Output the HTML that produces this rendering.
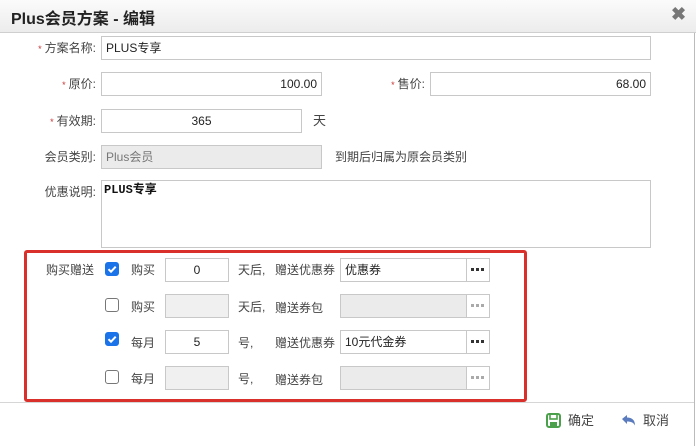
<!DOCTYPE html>
<html><head><meta charset="utf-8"><style>
*{margin:0;padding:0;box-sizing:border-box}
body{width:696px;height:446px;background:#fff;position:relative;overflow:hidden;font-family:"Liberation Sans","Noto Sans CJK SC",sans-serif;font-size:12px;color:#333}
.a{position:absolute}
.hd{left:0;top:0;width:696px;height:33px;background:linear-gradient(#fbfbfb,#ececec);border-bottom:1px solid #cfcfcf}
.t{left:11px;top:5px;font-size:16px;font-weight:bold;color:#222}
.rb{left:694px;top:33px;width:1px;height:413px;background:#bbb}
.in{position:absolute;border:1px solid #c8c8c8;height:24px;line-height:22px;padding:0 4px;font-size:12px;color:#222;background:#fff}
.g{background:#ebebeb}
.lb{position:absolute;text-align:right;color:#444;font-size:12px;line-height:24px}
.s{color:#c33;font-size:9px;margin-right:3px}
.cb{position:absolute;left:105px;width:14px;height:14px;border:1px solid #777;border-radius:3px;background:#fff}
.ck{background:#1a73e8;border-color:#1a73e8}
.tx{position:absolute;line-height:24px;color:#444}
.btn{position:absolute;left:466px;width:24px;height:24px;border:1px solid #c8c8c8;background:#fff}
.btn svg{position:absolute;left:4px;top:9px}
</style></head><body>
<div class="a hd"></div>
<div class="a t">Plus会员方案 - 编辑</div>
<div class="a" style="left:671px;top:4px;font-size:18px;color:#777;font-weight:bold">✖</div>
<div class="a rb"></div>

<div class="lb" style="left:0;width:96px;top:36px"><span class="s">*</span>方案名称:</div>
<div class="in" style="left:101px;top:36px;width:550px">PLUS专享</div>

<div class="lb" style="left:0;width:96px;top:72px"><span class="s">*</span>原价:</div>
<div class="in" style="left:101px;top:72px;width:221px;text-align:right">100.00</div>
<div class="lb" style="left:330px;width:95px;top:72px"><span class="s">*</span>售价:</div>
<div class="in" style="left:430px;top:72px;width:221px;text-align:right">68.00</div>

<div class="lb" style="left:0;width:96px;top:109px"><span class="s">*</span>有效期:</div>
<div class="in" style="left:101px;top:109px;width:201px;text-align:center">365</div>
<div class="tx" style="left:313px;top:109px;font-size:13px">天</div>

<div class="lb" style="left:0;width:96px;top:145px">会员类别:</div>
<div class="in g" style="left:101px;top:145px;width:221px;color:#777">Plus会员</div>
<div class="tx" style="left:335px;top:145px">到期后归属为原会员类别</div>

<div class="lb" style="left:0;width:96px;top:180px">优惠说明:</div>
<div class="in" style="left:101px;top:180px;width:550px;height:68px;line-height:16px;padding-top:1px;padding-left:2px;font-family:'Liberation Mono','Noto Sans CJK SC',monospace;font-size:12px;font-weight:bold;color:#111">PLUS专享</div>

<div class="a" style="left:24px;top:250px;width:503px;height:152px;border:3px solid #d9302c;border-radius:3px"></div>

<div class="tx" style="left:46px;top:258px">购买赠送</div>
<div class="cb ck" style="top:262px"><svg width="12" height="12" viewBox="0 0 12 12" style="position:absolute;left:0;top:0"><path d="M2.5 6.2l2.5 2.5 4.7-5" stroke="#fff" stroke-width="2" fill="none"/></svg></div>
<div class="tx" style="left:131px;top:258px">购买</div>
<div class="in" style="left:165px;top:258px;width:64px;text-align:center">0</div>
<div class="tx" style="left:238px;top:258px">天后,</div>
<div class="tx" style="left:275px;top:258px">赠送优惠券</div>
<div class="in" style="left:340px;top:258px;width:127px">优惠券</div>
<div class="btn" style="top:258px"><svg width="14" height="4"><rect x="0" y="0" width="3" height="3" fill="#333"/><rect x="5" y="0" width="3" height="3" fill="#333"/><rect x="10" y="0" width="3" height="3" fill="#333"/></svg></div>

<div class="cb" style="top:298px"></div>
<div class="tx" style="left:131px;top:295px">购买</div>
<div class="in g" style="left:165px;top:294px;width:64px;background:#f0f0f0"></div>
<div class="tx" style="left:238px;top:295px">天后,</div>
<div class="tx" style="left:275px;top:296px">赠送券包</div>
<div class="in g" style="left:340px;top:294px;width:127px"></div>
<div class="btn" style="top:294px"><svg width="14" height="4"><rect x="0" y="0" width="3" height="3" fill="#aaa"/><rect x="5" y="0" width="3" height="3" fill="#aaa"/><rect x="10" y="0" width="3" height="3" fill="#aaa"/></svg></div>

<div class="cb ck" style="top:332px"><svg width="12" height="12" viewBox="0 0 12 12" style="position:absolute;left:0;top:0"><path d="M2.5 6.2l2.5 2.5 4.7-5" stroke="#fff" stroke-width="2" fill="none"/></svg></div>
<div class="tx" style="left:131px;top:331px">每月</div>
<div class="in" style="left:165px;top:330px;width:64px;text-align:center">5</div>
<div class="tx" style="left:238px;top:331px">号,</div>
<div class="tx" style="left:275px;top:331px">赠送优惠券</div>
<div class="in" style="left:340px;top:330px;width:127px">10元代金券</div>
<div class="btn" style="top:330px"><svg width="14" height="4"><rect x="0" y="0" width="3" height="3" fill="#333"/><rect x="5" y="0" width="3" height="3" fill="#333"/><rect x="10" y="0" width="3" height="3" fill="#333"/></svg></div>

<div class="cb" style="top:370px"></div>
<div class="tx" style="left:131px;top:367px">每月</div>
<div class="in g" style="left:165px;top:366px;width:64px;background:#f0f0f0"></div>
<div class="tx" style="left:238px;top:367px">号,</div>
<div class="tx" style="left:275px;top:368px">赠送券包</div>
<div class="in g" style="left:340px;top:366px;width:127px"></div>
<div class="btn" style="top:366px"><svg width="14" height="4"><rect x="0" y="0" width="3" height="3" fill="#aaa"/><rect x="5" y="0" width="3" height="3" fill="#aaa"/><rect x="10" y="0" width="3" height="3" fill="#aaa"/></svg></div>

<div class="a" style="left:0;top:402px;width:694px;height:1px;background:#d6d6d6"></div>
<svg class="a" style="left:546px;top:413px" width="15" height="15" viewBox="0 0 15 15"><rect x="1" y="1" width="13" height="13" rx="2" fill="none" stroke="#4ba04b" stroke-width="2"/><rect x="4" y="1" width="7" height="5" fill="none" stroke="#4ba04b" stroke-width="1.6"/><rect x="4" y="9" width="7" height="5" fill="#4ba04b"/></svg>
<div class="tx" style="left:568px;top:409px;font-size:13px">确定</div>
<svg class="a" style="left:621px;top:414px" width="16" height="14" viewBox="0 0 16 14"><path d="M1 5l5-4v2.5c5 0 8 2.5 8 8-1.5-3-4-4-8-4V10z" fill="#5b7bbf"/></svg>
<div class="tx" style="left:643px;top:409px;font-size:13px">取消</div>
</body></html>
